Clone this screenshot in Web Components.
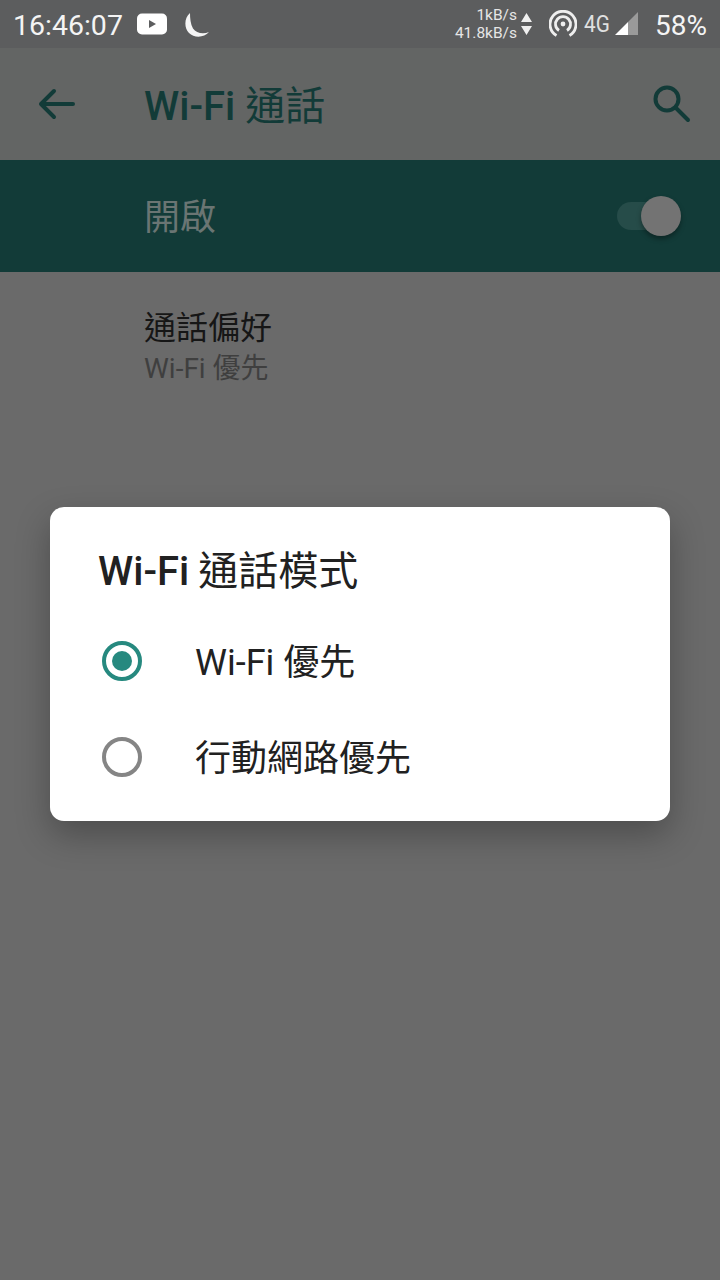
<!DOCTYPE html>
<html lang="zh-Hant">
<head>
<meta charset="utf-8">
<title>Wi-Fi 通話</title>
<style>
  html, body { margin: 0; padding: 0; background: #6a6a6a; }
  body { width: 720px; height: 1280px; overflow: hidden; font-family: Roboto, "Noto Sans CJK TC", sans-serif; }
</style>
</head>
<body>
<wifi-calling-page>
  <status-bar></status-bar>
  <app-bar latin="Wi-Fi" cjk="通話"></app-bar>
  <switch-bar label="開啟"></switch-bar>
  <pref-row summary="Wi-Fi 優先">通話偏好</pref-row>
  <mode-dialog latin="Wi-Fi" cjk="通話模式">
    <radio-row checked>Wi-Fi 優先</radio-row>
    <radio-row>行動網路優先</radio-row>
  </mode-dialog>
</wifi-calling-page>

<script>
class WifiCallingPage extends HTMLElement {
  constructor() {
    super();
    this.attachShadow({ mode: 'open' });
    this.shadowRoot.innerHTML = `
      <style>
        :host { display: flex; flex-direction: column; position: relative; width: 720px; height: 1280px; background: #6a6a6a; }
      </style>
      <slot></slot>
    `;
  }
}

class StatusBar extends HTMLElement {
  constructor() {
    super();
    this.attachShadow({ mode: 'open' });
    this.shadowRoot.innerHTML = `
      <style>
        :host { display: flex; align-items: center; height: 48px; background: #5c5d5e; color: #fff; padding: 0 13px 0 13px; box-sizing: border-box; }
        .time { font-size: 28.5px; line-height: 52px; height: 48px; color: #f4f4f4; }
        .yt { margin-left: 14px; display: block; }
        .moon { margin: 2px 0 0 18px; display: block; }
        .grow { flex: 1; }
        .speed { font-size: 15.5px; line-height: 18px; text-align: right; color: #e6e6e6; }
        .arrows { margin-left: 4px; display: block; }
        .hotspot { margin-left: 17px; display: block; }
        .net { margin-left: 7px; font-size: 23px; color: #e0e0e0; transform: scaleX(.9); transform-origin: left; width: 28px; white-space: nowrap; }
        .signal { margin-left: 3px; display: block; }
        .batt { margin-left: 17px; font-size: 28px; line-height: 52px; height: 48px; color: #f4f4f4; }
      </style>
      <span class="time">16:46:07</span>
      <svg class="yt" width="30" height="22" viewBox="0 0 30 22"><rect width="30" height="21" y="0.5" rx="5" fill="#fff"/><path d="M12 7l7 4-7 4z" fill="#5c5d5e"/></svg>
      <svg class="moon" width="25" height="25" viewBox="0 0 25 25"><path d="M5 0C-1 5-1 15 4 20c5 5 15 5 20-1-6 2.500-13 1-16-3.500C5.500 11 5 5 5 0z" fill="#f5f5f5"/></svg>
      <span class="grow"></span>
      <div class="speed">1kB/s<br>41.8kB/s</div>
      <svg class="arrows" width="11" height="24" viewBox="0 0 11 24"><path d="M5.500 1l5.500 9H0zM0 14h11L5.500 23z" fill="#f0f0f0"/></svg>
      <svg class="hotspot" width="28" height="28" viewBox="0 0 28 28" fill="none" stroke="#eee" stroke-width="2.800"><path d="M7.500 25.500a13 13 0 1 1 13 0"/><path d="M10 20.500a7.500 7.500 0 1 1 8 0"/><circle cx="14" cy="14" r="2.400" fill="#eee" stroke="none"/></svg>
      <span class="net">4G</span>
      <svg class="signal" width="23" height="24" viewBox="0 0 23 24"><path d="M0 23L13 10v13z" fill="#fff"/><path d="M13 10L23 0v23H13z" fill="#9a9a9a"/></svg>
      <span class="batt">58%</span>
    `;
  }
}

class AppBar extends HTMLElement {
  constructor() {
    super();
    this.attachShadow({ mode: 'open' });
    const latin = this.getAttribute('latin');
    const cjk = this.getAttribute('cjk');
    this.shadowRoot.innerHTML = `
      <style>
        :host { display: flex; align-items: center; height: 112px; background: #636564; color: #123b38; padding: 0 28px 0 38px; box-sizing: border-box; }
        .title { margin-left: 68px; font-size: 40px; flex: 1; line-height: 118px; height: 112px; }
        .latin { font-weight: 500; }
        svg { display: block; }
      </style>
      <svg width="38" height="32" viewBox="0 0 38 32" fill="none" stroke="#123b38" stroke-width="4" stroke-linecap="round" stroke-linejoin="round"><path d="M35 16H3M16 3L3 16l13 13"/></svg>
      <span class="title"><span class="latin">${latin}</span> ${cjk}</span>
      <svg width="40" height="40" viewBox="0 0 40 40" fill="none" stroke="#123b38" stroke-width="4" stroke-linecap="round"><circle cx="15" cy="15" r="11.500"/><path d="M24 24l12 12"/></svg>
    `;
  }
}

class SwitchBar extends HTMLElement {
  constructor() {
    super();
    this.attachShadow({ mode: 'open' });
    const label = this.getAttribute('label');
    this.shadowRoot.innerHTML = `
      <style>
        :host { display: flex; align-items: center; height: 112px; background: #123b38; padding: 0 39px 0 144px; box-sizing: border-box; color: #6a7573; }
        .label { flex: 1; font-size: 36px; line-height: 116px; height: 112px; }
        .switch { position: relative; width: 64px; height: 28px; }
        .track { width: 50px; height: 28px; border-radius: 14px; background: #264c49; }
        .thumb { position: absolute; right: 0; top: -6px; width: 40px; height: 40px; border-radius: 50%; background: #737373; box-shadow: 0 3px 5px rgba(0,0,0,.35); }
      </style>
      <span class="label">${label}</span>
      <div class="switch"><div class="track"></div><div class="thumb"></div></div>
    `;
  }
}

class PrefRow extends HTMLElement {
  constructor() {
    super();
    this.attachShadow({ mode: 'open' });
    const summary = this.getAttribute('summary');
    this.shadowRoot.innerHTML = `
      <style>
        :host { display: block; padding: 34px 24px 0 144px; }
        .title { font-size: 32px; line-height: 44px; color: #161616; }
        .summary { font-size: 28px; line-height: 38px; color: #3f3f3f; }
      </style>
      <div class="title"><slot></slot></div>
      <div class="summary">${summary}</div>
    `;
  }
}

class ModeDialog extends HTMLElement {
  constructor() {
    super();
    this.attachShadow({ mode: 'open' });
    const latin = this.getAttribute('latin');
    const cjk = this.getAttribute('cjk');
    this.shadowRoot.innerHTML = `
      <style>
        :host { position: absolute; left: 50px; top: 507px; width: 620px; height: 314px; display: block; box-sizing: border-box; background: #fff; border-radius: 14px; box-shadow: 0 14px 34px rgba(0,0,0,.28); padding-top: 41px; }
        h2 { margin: 0 0 0 48px; font-size: 40px; line-height: 48px; font-weight: 400; color: #212121; word-spacing: -1px; }
        .latin { font-weight: 500; }
        .list { margin-top: 17px; display: flex; flex-direction: column; }
      </style>
      <h2><span class="latin">${latin}</span> ${cjk}</h2>
      <div class="list"><slot></slot></div>
    `;
  }
}

class RadioRow extends HTMLElement {
  constructor() {
    super();
    this.attachShadow({ mode: 'open' });
    const on = this.hasAttribute('checked');
    const ring = on ? '#26897f' : '#858585';
    this.shadowRoot.innerHTML = `
      <style>
        :host { display: flex; align-items: center; height: 96px; padding-left: 52px; font-size: 36px; color: #212121; }
        svg { display: block; flex: none; }
        .text { margin-left: 53px; line-height: 100px; height: 96px; }
      </style>
      <svg width="40" height="40" viewBox="0 0 40 40"><circle cx="20" cy="20" r="18" fill="none" stroke="${ring}" stroke-width="4"/>${on ? `<circle cx="20" cy="20" r="10" fill="${ring}"/>` : ''}</svg>
      <span class="text"><slot></slot></span>
    `;
  }
}

customElements.define('wifi-calling-page', WifiCallingPage);
customElements.define('status-bar', StatusBar);
customElements.define('app-bar', AppBar);
customElements.define('switch-bar', SwitchBar);
customElements.define('pref-row', PrefRow);
customElements.define('mode-dialog', ModeDialog);
customElements.define('radio-row', RadioRow);
</script>
</body>
</html>
